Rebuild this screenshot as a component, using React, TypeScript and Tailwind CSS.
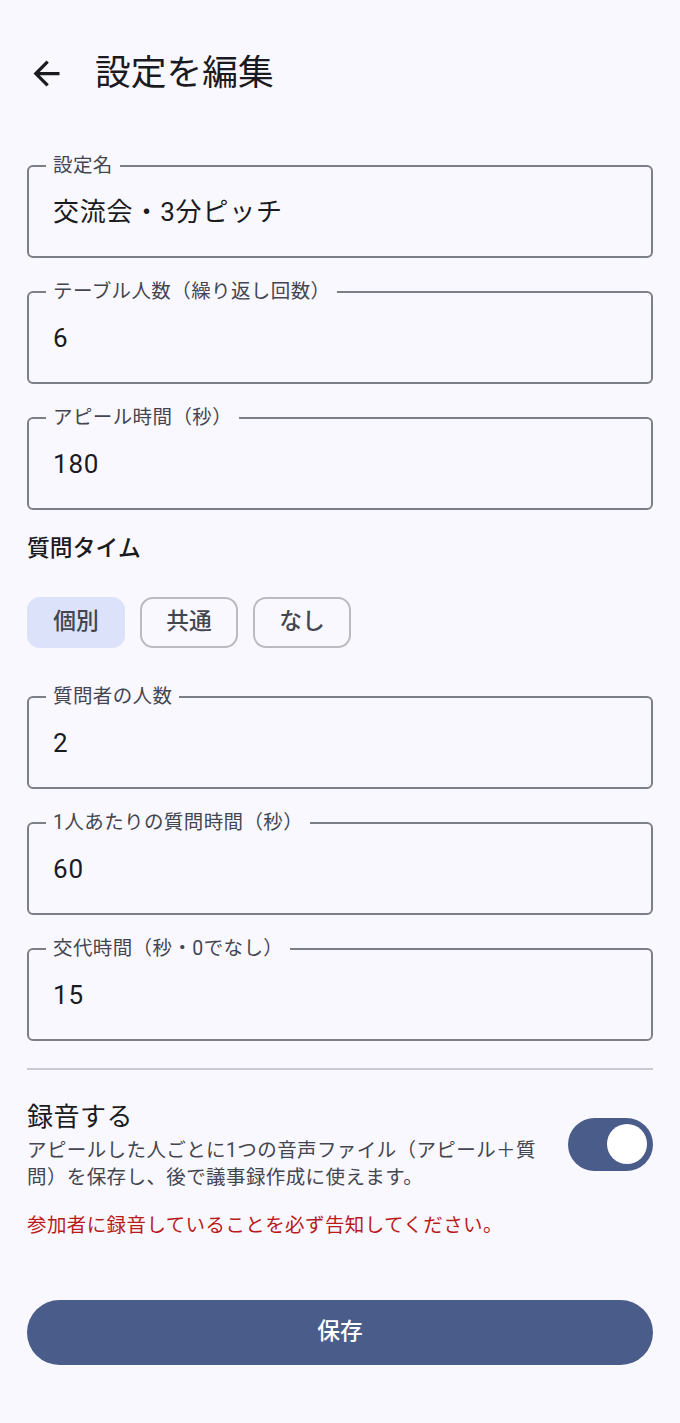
import { useState } from "react";

const fields1 = [
  { label: "設定名", value: "交流会・3分ピッチ" },
  { label: "テーブル人数（繰り返し回数）", value: "6" },
  { label: "アピール時間（秒）", value: "180" },
];

const fields2 = [
  { label: "質問者の人数", value: "2" },
  { label: "1人あたりの質問時間（秒）", value: "60" },
  { label: "交代時間（秒・0でなし）", value: "15" },
];

const modes = ["個別", "共通", "なし"];

function OutlinedField({ label, value }: { label: string; value: string }) {
  return (
    <fieldset className="border-2 border-[#7d7f88] rounded-[6px] pl-[17px] pr-4 pt-[14px] pb-[24px]">
      <legend className="px-[7px] text-[19.5px] leading-[26px] tracking-[0.4px] text-[#44464f]">
        {label}
      </legend>
      <div className="pl-[7px] text-[26px] leading-[39px] tracking-[0.8px] text-[#1a1b20]">
        {value}
      </div>
    </fieldset>
  );
}

export default function App() {
  const [mode, setMode] = useState("個別");
  const [record, setRecord] = useState(true);

  return (
    <div className="min-h-screen pt-[45px] bg-[#faf8ff] font-[Roboto,'Noto_Sans_CJK_JP',sans-serif] text-[#1a1b20]">
      {/* top bar */}
      <div className="flex items-center h-[56px] pl-[27px]">
        <svg viewBox="0 0 24 24" className="w-[39px] h-[39px] fill-[#1a1b20]">
          <path d="M20 11H7.83l5.59-5.59L12 4l-8 8 8 8 1.41-1.41L7.83 13H20v-2z" />
        </svg>
        <h1 className="ml-[29px] text-[35.75px] leading-[46px] font-normal">設定を編集</h1>
      </div>

      <div className="px-[27px] mt-[52px]">
        <div className="flex flex-col gap-[21px]">
          {fields1.map((f) => (
            <OutlinedField key={f.label} label={f.label} value={f.value} />
          ))}
        </div>

        <div className="mt-[23px] text-[22.75px] leading-[32px] font-medium tracking-[0.1px]">
          質問タイム
        </div>

        <div className="flex gap-[15px] mt-[32px]">
          {modes.map((m) =>
            m === mode ? (
              <button
                key={m}
                onClick={() => setMode(m)}
                className="w-[98px] h-[51px] rounded-[13px] bg-[#dce2f9] text-[22.75px] font-medium text-[#41474d]"
              >
                {m}
              </button>
            ) : (
              <button
                key={m}
                onClick={() => setMode(m)}
                className="w-[98px] h-[51px] rounded-[13px] border-2 border-[#b9bac2] text-[22.75px] font-medium text-[#44464f]"
              >
                {m}
              </button>
            )
          )}
        </div>

        <div className="flex flex-col gap-[21px] mt-[36px]">
          {fields2.map((f) => (
            <OutlinedField key={f.label} label={f.label} value={f.value} />
          ))}
        </div>

        <div className="mt-[27px] h-[2px] bg-[#c9cad3]" />

        <div className="flex items-center gap-[22px] mt-[27px]">
          <div className="flex-1">
            <div className="text-[26px] leading-[40px] tracking-[0.5px]">録音する</div>
            <p className="text-[19.5px] leading-[27px] tracking-[0.4px] text-[#44464f]">
              アピールした人ごとに1つの音声ファイル（アピール＋質問）を保存し、後で議事録作成に使えます。
            </p>
          </div>
          <button
            onClick={() => setRecord(!record)}
            className={`shrink-0 w-[85px] h-[53px] rounded-full flex items-center px-[6px] ${
              record ? "bg-[#4a5c8a] justify-end" : "bg-[#e2e1ec] justify-start"
            }`}
          >
            <span className="block w-[40px] h-[40px] rounded-full bg-white" />
          </button>
        </div>

        <p className="mt-[21px] text-[19.5px] leading-[27px] tracking-[0.4px] text-[#ba1a1a]">
          参加者に録音していることを必ず告知してください。
        </p>

        <button className="mt-[61px] w-full h-[65px] rounded-full bg-[#4a5c8a] text-white text-[22.75px] font-medium tracking-[0.1px]">
          保存
        </button>
      </div>
    </div>
  );
}
